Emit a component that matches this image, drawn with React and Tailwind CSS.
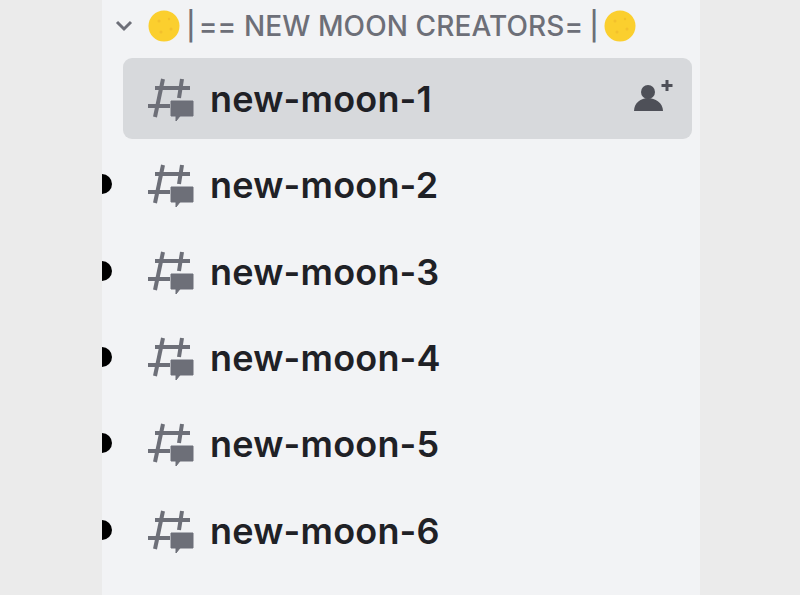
const channels = ['new-moon-1', 'new-moon-2', 'new-moon-3', 'new-moon-4', 'new-moon-5', 'new-moon-6']

function MoonEmoji() {
  return (
    <svg width="32" height="32" viewBox="0 0 32 32" className="shrink-0">
      <circle cx="16" cy="16" r="15.5" fill="#fbcf2e" />
      <circle cx="11" cy="11" r="1.5" fill="#f3c02c" />
      <circle cx="21" cy="9" r="1.2" fill="#f3c02c" />
      <circle cx="23" cy="19" r="1.5" fill="#f3c02c" />
      <circle cx="13" cy="22" r="1.5" fill="#f3c02c" />
    </svg>
  )
}

function ThreadHash() {
  return (
    <svg width="48" height="48" viewBox="0 0 48 48" className="shrink-0">
      <g stroke="#6d6f78" strokeWidth="4" fill="none">
        <path d="M16 5 L8 43" />
        <path d="M35 5 L32 24" />
        <path d="M8 14 H43" />
        <path d="M1 32 H23" />
      </g>
      <path d="M24 27 H46 V42 H33 L29 47 V42 H24 Z" fill="#6d6f78" stroke="#6d6f78" strokeWidth="1" strokeLinejoin="round" />
    </svg>
  )
}

function InviteIcon() {
  return (
    <svg width="40" height="36" viewBox="0 0 40 36">
      <circle cx="14" cy="12" r="7" fill="#4e5058" />
      <path d="M0 31 C0 23 7 18 14 18 C21 18 29 23 29 31 Z" fill="#4e5058" />
      <path d="M33 0 V11 M27.5 5.5 H38.5" stroke="#4e5058" strokeWidth="3" />
    </svg>
  )
}

function ChannelRow({ name, active }) {
  return (
    <div className="relative h-[86.3px] flex items-center pl-[21px] pr-2">
      {!active && (
        <span className="absolute left-0 top-1/2 -translate-y-1/2 w-[10px] h-[20px] rounded-r-full bg-black" />
      )}
      <div className={`flex items-center w-full h-[81px] pl-[24px] pr-[18px] rounded-[9px] ${active ? 'bg-[#d7d9dc]' : ''}`}>
        <ThreadHash />
        <span className="ml-[15px] pt-[2px] flex-1 text-[36px] leading-none font-semibold text-[#1f2126] tracking-[0.2px]">{name}</span>
        {active && <InviteIcon />}
      </div>
    </div>
  )
}

export default function App() {
  return (
    <div
      className="w-[800px] h-[595px] overflow-hidden bg-[#ebebeb] flex justify-center pl-[2px]"
      style={{ fontFamily: 'Inter, "Noto Sans", sans-serif' }}
    >
      <div className="w-[598px] h-full bg-[#f2f3f5] flex flex-col">
        <div className="h-[51px] flex items-center pl-[13px] shrink-0">
          <svg width="18" height="12" viewBox="0 0 18 12" className="shrink-0">
            <path d="M2 2 L9 9 L16 2" stroke="#6d6f78" strokeWidth="3" fill="none" />
          </svg>
          <div className="ml-[15px] flex items-center text-[28px] leading-none font-medium text-[#6d6f78] tracking-[0.1px] whitespace-nowrap">
            <MoonEmoji />
            <span className="ml-[6px]">|</span>
            <span className="ml-[3px]">== NEW MOON CREATORS=</span>
            <span className="ml-[6px]">|</span>
            <span className="ml-[5px]"><MoonEmoji /></span>
          </div>
        </div>
        <div className="mt-[4px]">
          {channels.map((name, i) => (
            <ChannelRow key={name} name={name} active={i === 0} />
          ))}
        </div>
      </div>
    </div>
  )
}
